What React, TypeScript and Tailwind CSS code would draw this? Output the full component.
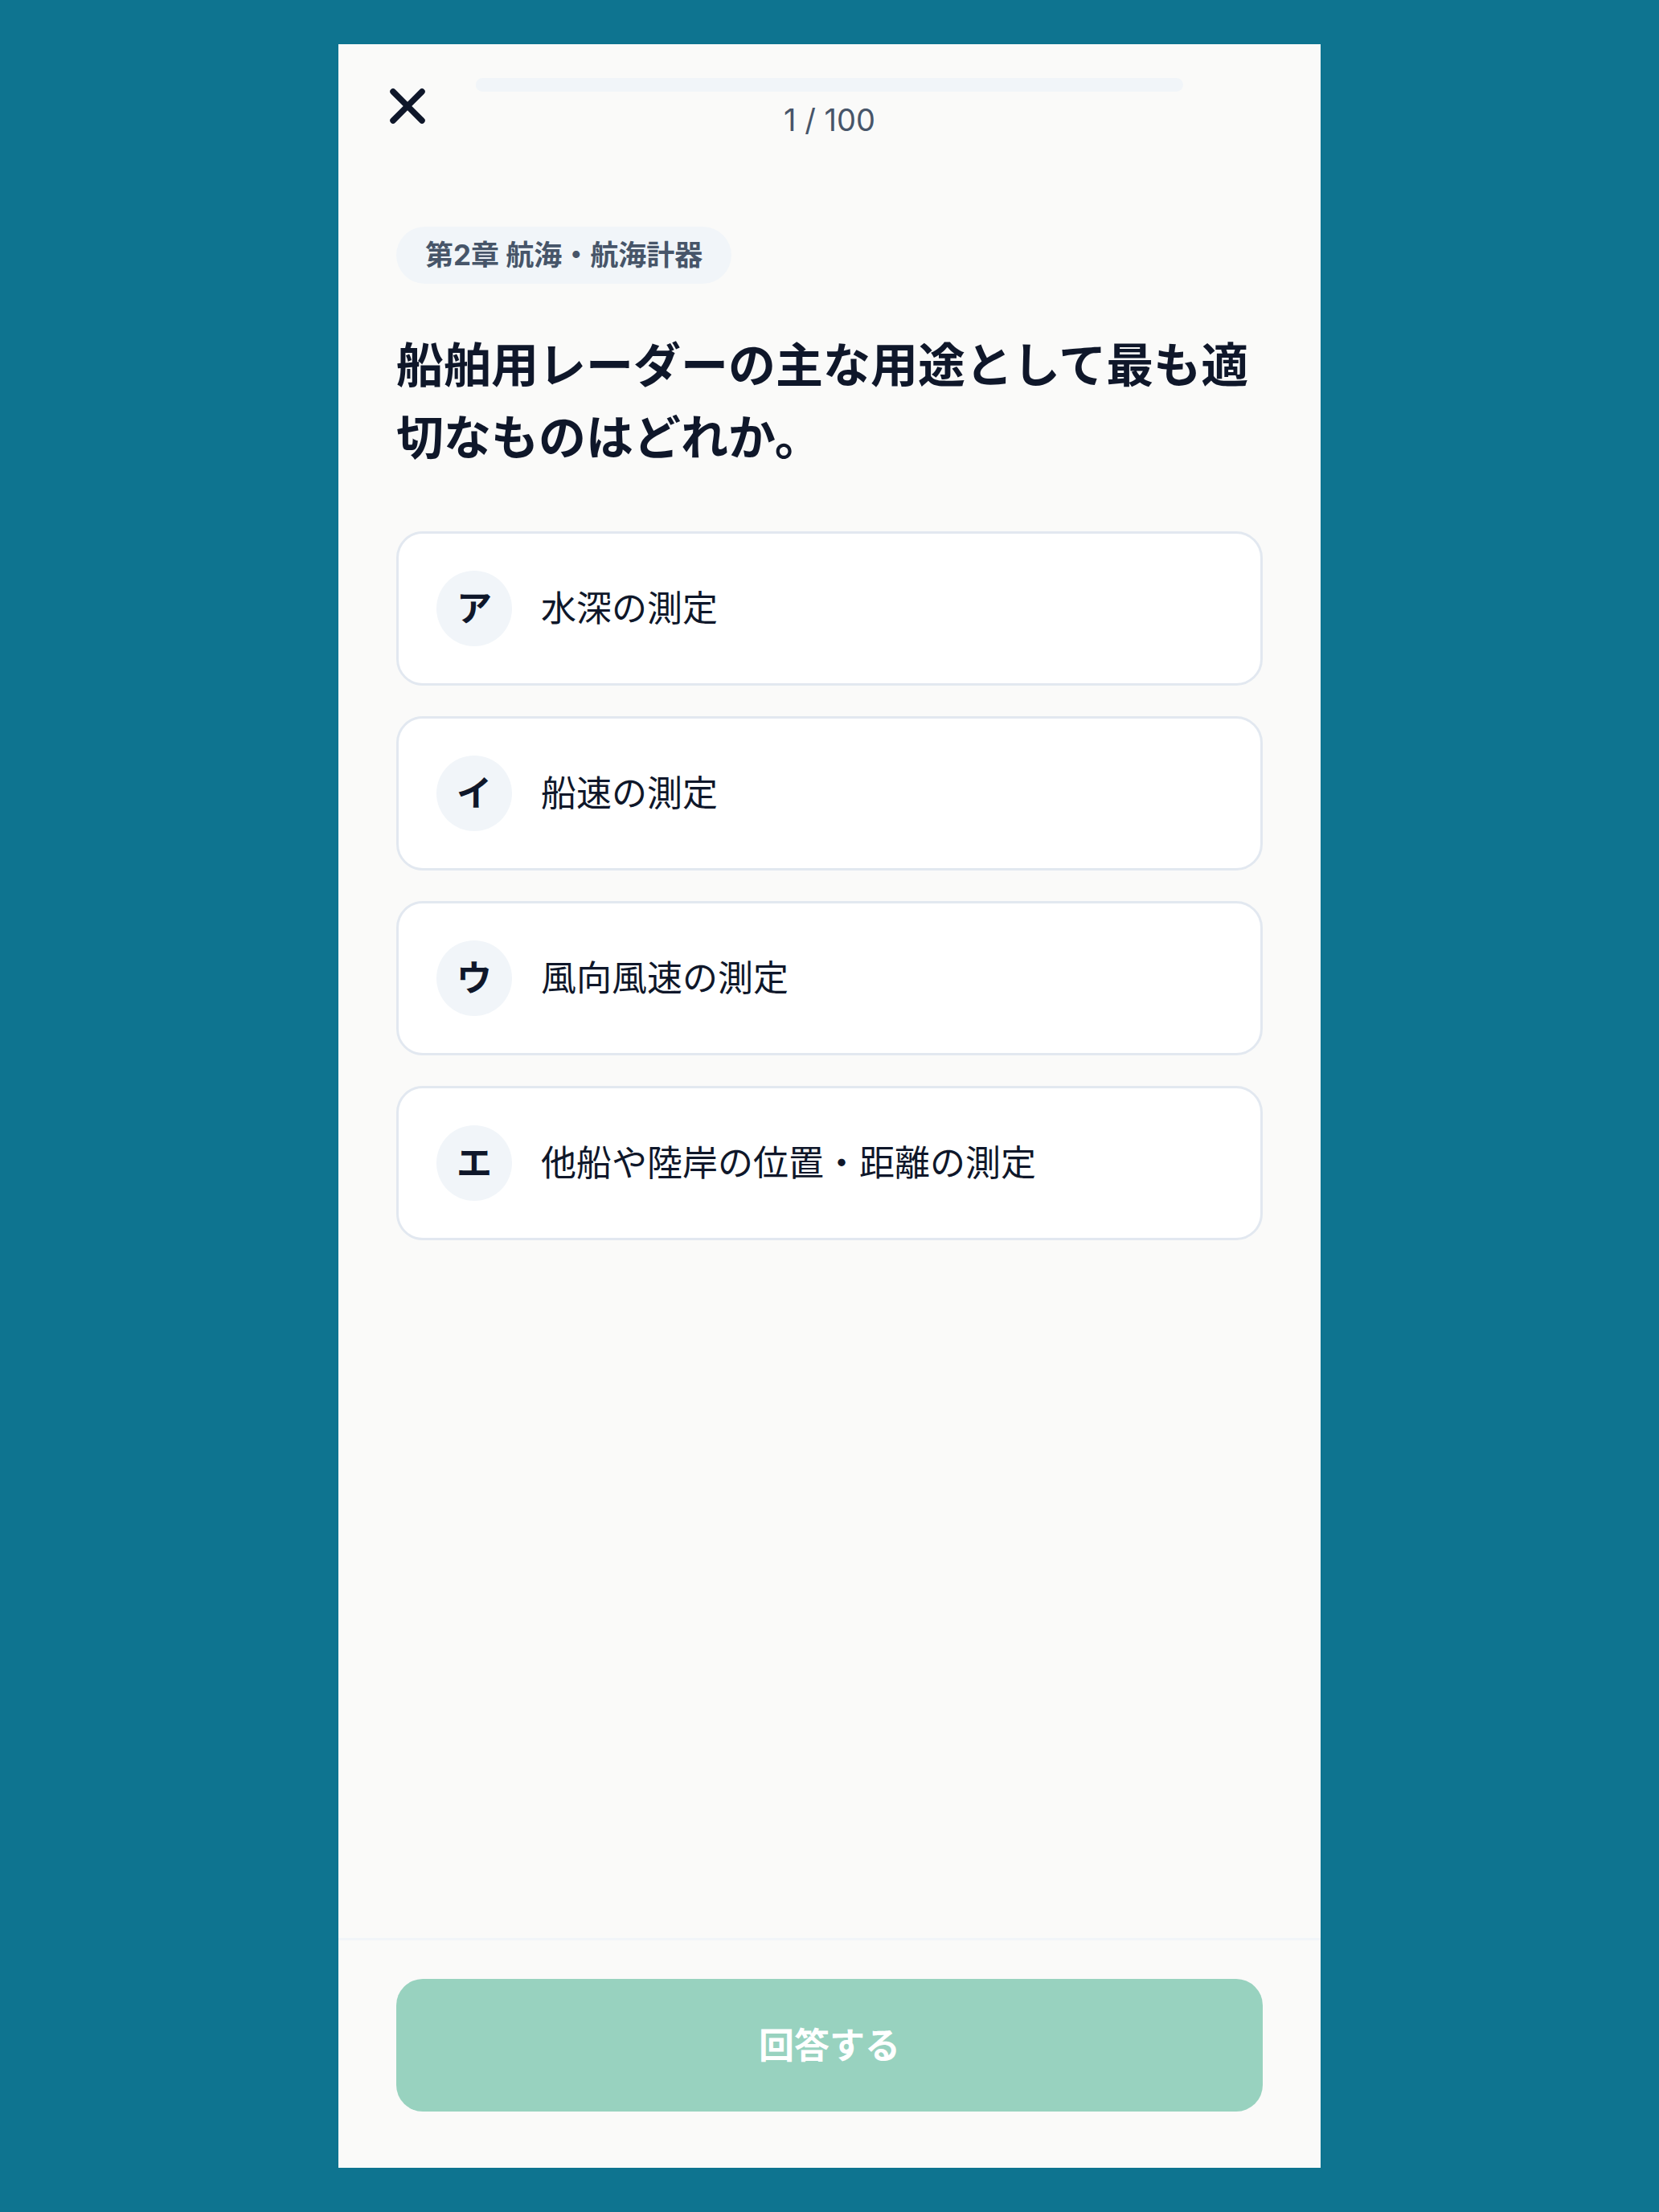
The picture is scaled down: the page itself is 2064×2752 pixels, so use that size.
import React from "react";

const font = { fontFamily: 'Inter, "Noto Sans CJK JP", sans-serif' };

const options = [
  { k: "ア", t: "水深の測定" },
  { k: "イ", t: "船速の測定" },
  { k: "ウ", t: "風向風速の測定" },
  { k: "エ", t: "他船や陸岸の位置・距離の測定" },
];

export default function App() {
  return (
    <div className="min-h-screen bg-[#0e7490] py-[55px]" style={font}>
      <div className="mx-auto flex h-[2642px] w-[1222px] flex-col bg-[#fafaf9]">
        {/* header */}
        <div className="flex items-start gap-[41px] px-[42px] pt-[33px]">
          <button className="flex h-[88px] w-[88px] items-center justify-center text-[#0f172a]">
            <svg width="72" height="72" viewBox="0 0 24 24" fill="none" stroke="currentColor" strokeWidth="2.5" strokeLinecap="round" strokeLinejoin="round">
              <path d="M18 6 6 18" />
              <path d="m6 6 12 12" />
            </svg>
          </button>
          <div className="flex flex-1 flex-col items-center pt-[9px]">
            <div className="h-[17px] w-full overflow-hidden rounded-full bg-[#f1f5f9]">
              <div className="h-full rounded-full bg-[#f1f5f9]" style={{ width: "1%" }} />
            </div>
            <div className="mt-[8px] text-[38px] leading-[55px] text-[#475569]">1 / 100</div>
          </div>
          <div className="w-[88px]" />
        </div>

        {/* content */}
        <div className="px-[72px] pt-[105px]">
          <div className="inline-flex h-[71px] items-center rounded-full bg-[#f1f5f9] px-[36px] text-[35px] font-bold text-[#475569]">
            第2章 航海・航海計器
          </div>
          <h1 className="mt-[57px] text-[59px] font-bold leading-[90px] text-[#0f172a]">
            船舶用レーダーの主な用途として最も適切なものはどれか。
          </h1>
          <div className="mt-[71px] flex flex-col gap-[38px]">
            {options.map((o) => (
              <div
                key={o.k}
                className="flex items-center gap-[36px] rounded-[33px] border-[3px] border-[#e2e8f0] bg-white px-[47px] py-[46px]"
              >
                <div className="flex h-[94px] w-[94px] shrink-0 items-center justify-center rounded-full bg-[#f1f5f9] text-[44px] font-bold text-[#0f172a]">
                  {o.k}
                </div>
                <div className="text-[44px] text-[#0f172a]">{o.t}</div>
              </div>
            ))}
          </div>
        </div>

        <div className="flex-1" />

        {/* footer */}
        <div className="border-t-[3px] border-[#f1f5f9] px-[72px] pb-[70px] pt-[48px]">
          <button className="flex h-[165px] w-full items-center justify-center rounded-[33px] bg-[#98d2bf] text-[44px] font-bold text-white">
            回答する
          </button>
        </div>
      </div>
    </div>
  );
}
